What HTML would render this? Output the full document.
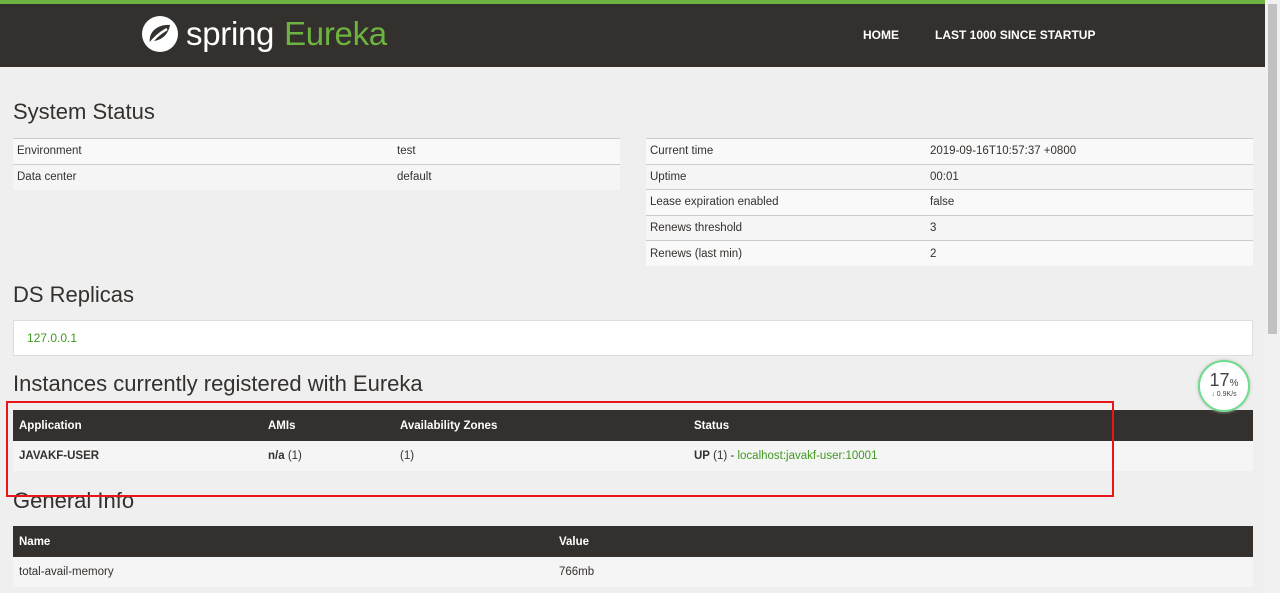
<!DOCTYPE html>
<html><head><meta charset="utf-8"><style>
*{margin:0;padding:0;box-sizing:border-box}
body{width:1280px;height:593px;overflow:hidden;background:#efefef;font-family:"Liberation Sans",sans-serif;color:#34302d;position:relative}
.hdr{position:absolute;left:0;top:0;width:1265px;height:67px;background:#34302d;border-top:4px solid #6db33f}
.logo{position:absolute;left:140px;top:10px;height:40px;display:flex;align-items:center}
.logo span{font-size:33px;color:#fff;margin-left:6px;letter-spacing:-0.3px}
.logo b{font-weight:normal;color:#6db33f;margin-left:10px}
.nav{position:absolute;top:24px;font-size:12px;font-weight:bold;color:#fff}
.sb{position:absolute;right:0;top:0;width:15px;height:593px;background:#f1f1f1}
.sb div{position:absolute;left:3px;top:4px;width:9px;height:330px;background:#c1c1c1}
h2{position:absolute;left:13px;font-weight:normal;font-size:22px;color:#34302d}
table{position:absolute;border-collapse:collapse;font-size:11.5px}
td{height:25.5px;padding:0 4px;border-top:1px solid #ccc;background:#f9f9f9}
tr:nth-child(even) td{background:#f5f5f5}
.dt th{background:#34302d;color:#fff;text-align:left;font-size:11.5px;height:31px;padding:0 6px}
.dt td{height:30px;padding:0 6px;background:#f8f8f8;border:none}
a{color:#3f9a1f;text-decoration:none}
</style></head><body>
<div class="hdr">
<div class="logo"><svg width="40" height="40" viewBox="0 0 40 40"><circle cx="20" cy="20" r="18" fill="#fff"/><path d="M10 29 C8 18 18 10 30 11 C28 22 20 27 12 27" fill="#34302d"/><path d="M9 31 C14 24 20 19 27 15" stroke="#fff" stroke-width="2.5" fill="none"/></svg><span>spring<b>Eureka</b></span></div>
<div class="nav" style="left:863px">HOME</div>
<div class="nav" style="left:935px">LAST 1000 SINCE STARTUP</div>
</div>
<div class="sb"><div></div></div>
<h2 style="top:99px">System Status</h2>
<table style="left:13px;top:138px;width:607px">
<tr><td style="width:380px">Environment</td><td>test</td></tr>
<tr><td>Data center</td><td>default</td></tr></table>
<table style="left:646px;top:138px;width:607px">
<tr><td style="width:280px">Current time</td><td>2019-09-16T10:57:37 +0800</td></tr>
<tr><td>Uptime</td><td>00:01</td></tr>
<tr><td>Lease expiration enabled</td><td>false</td></tr>
<tr><td>Renews threshold</td><td>3</td></tr>
<tr><td>Renews (last min)</td><td>2</td></tr></table>
<h2 style="top:282px">DS Replicas</h2>
<div style="position:absolute;left:13px;top:320px;width:1240px;height:36px;background:#fff;border:1px solid #ddd;font-size:12px;padding:10px 13px"><a>127.0.0.1</a></div>
<h2 style="top:371px">Instances currently registered with Eureka</h2>
<table class="dt" style="left:13px;top:410px;width:1240px">
<tr><th style="width:249px">Application</th><th style="width:132px">AMIs</th><th style="width:294px">Availability Zones</th><th>Status</th></tr>
<tr><td><b>JAVAKF-USER</b></td><td><b>n/a</b> (1)</td><td>(1)</td><td><b>UP</b> (1) - <a>localhost:javakf-user:10001</a></td></tr></table>
<h2 style="top:488px">General Info</h2>
<table class="dt" style="left:13px;top:526px;width:1240px">
<tr><th style="width:540px">Name</th><th>Value</th></tr>
<tr><td>total-avail-memory</td><td>766mb</td></tr></table>
<div style="position:absolute;left:6px;top:401px;width:1108px;height:96px;border:2px solid #e8151b"></div>
<div style="position:absolute;left:1198px;top:360px;width:52px;height:52px;border-radius:50%;background:#fff;border:2px solid #6fdc8c;text-align:center;box-shadow:0 0 3px #bbb">
<div style="font-size:18px;margin-top:8px;color:#444">17<span style="font-size:10px">%</span></div>
<div style="font-size:7px;color:#444"><span style="color:#2a2">↓</span> 0.9K/s</div></div>
</body></html>
